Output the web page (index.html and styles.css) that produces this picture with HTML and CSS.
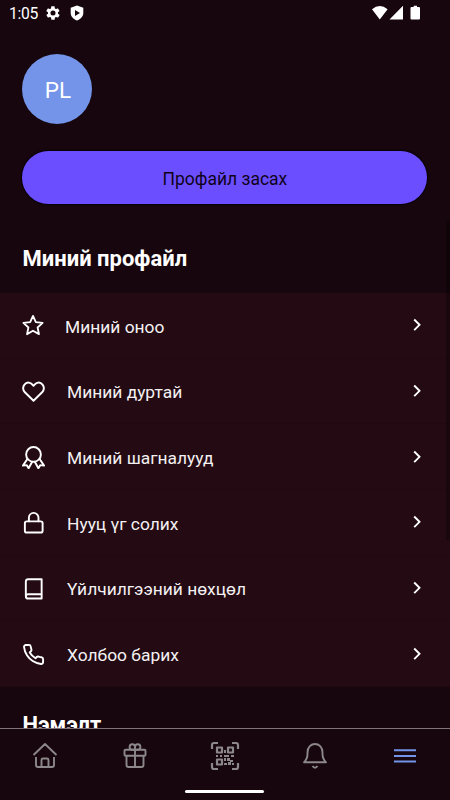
FILE: index.html
```html
<!DOCTYPE html>
<html lang="mn">
<head>
<meta charset="utf-8">
<title>Профайл</title>
<link rel="stylesheet" href="styles.css">
</head>
<body>
<div class="screen">
  <header class="status">
    <span class="clock">1:05</span>
    <svg class="gear" width="16" height="16" viewBox="0 0 24 24"><path fill="#fff" fill-rule="evenodd" d="M19.4 13a7.500 7.500 0 0 0 0-2l2.100-1.600a.5.5 0 0 0 .1-.7l-2-3.400a.5.5 0 0 0-.6-.2l-2.500 1a7 7 0 0 0-1.700-1l-.4-2.700a.5.5 0 0 0-.5-.4h-4a.5.5 0 0 0-.5.400L9 5.100a7 7 0 0 0-1.700 1l-2.500-1a.5.5 0 0 0-.6.2l-2 3.400a.5.5 0 0 0 .1.700L4.500 11a7.500 7.500 0 0 0 0 2l-2.100 1.600a.5.5 0 0 0-.1.700l2 3.400c.1.200.4.300.6.200l2.500-1a7 7 0 0 0 1.700 1l.4 2.700c0 .2.200.4.500.4h4c.3 0 .5-.2.500-.4l.4-2.700a7 7 0 0 0 1.700-1l2.500 1c.2.100.5 0 .6-.2l2-3.400a.5.5 0 0 0-.1-.7zM12 15.800a3.800 3.800 0 1 1 0-7.600 3.800 3.800 0 0 1 0 7.600z"/></svg>
    <svg class="shield" width="14" height="16" viewBox="0 0 14 16"><path fill="#fff" fill-rule="evenodd" d="M7 .5 13.300 2.800V8c0 3.500-2.700 6.300-6.300 7.500C3.400 14.300.7 11.500.7 8V2.800zM5 5v6l5-3z"/></svg>
    <svg class="signals" width="48" height="16" viewBox="0 0 48 16"><path fill="#fff" d="M0 4.200Q7.800-2.400 15.600 4.200L7.800 14.500zM31 .8V14.500H17.500zM39.500 2h2.200V.8h3.300V2H47q1 0 1 1v10.500q0 1-1 1h-7.500q-1 0-1-1V3q0-1 1-1z"/></svg>
  </header>
  <main class="content">
    <div class="avatar">PL</div>
    <button class="edit">Профайл засах</button>
    <h2 class="heading">Миний профайл</h2>
    <ul class="menu">
      <li class="row"><svg class="icon star" viewBox="0 0 24 24"><path d="m12 2 3.100 6.900 7.400.8-5.500 5 1.500 7.300-6.500-3.700L5.500 22 7 14.700l-5.500-5 7.400-.8z"/></svg><span class="label">Миний оноо</span><svg class="chev" viewBox="0 0 8 14"><path d="m1.200 1.500 5.300 5.300-5.300 5.300"/></svg></li>
      <li class="row"><svg class="icon" viewBox="0 0 24 24"><path d="M12 21.700 3 12.800C-1.500 7.500 4-.3 10 4L12 6l2-2c6-4.300 11.500 3.500 7 8.800z"/></svg><span class="label">Миний дуртай</span><svg class="chev" viewBox="0 0 8 14"><path d="m1.200 1.500 5.300 5.300-5.300 5.300"/></svg></li>
      <li class="row"><svg class="icon" viewBox="0 0 24 24"><circle cx="12" cy="8.800" r="7.700"/><path d="m5.600 13.500-4.600 7 4-.5 1.900 3.300 3.600-6.600m7.900-3.200 4.600 7-4-.5-1.900 3.300-3.600-6.600"/></svg><span class="label">Миний шагналууд</span><svg class="chev" viewBox="0 0 8 14"><path d="m1.200 1.500 5.300 5.300-5.300 5.300"/></svg></li>
      <li class="row"><svg class="icon" viewBox="0 0 24 24"><rect x="3" y="10.800" width="18.500" height="11.700" rx="2"/><path d="M7.200 10.800V7a5 5 0 0 1 10 0v3.800"/></svg><span class="label">Нууц үг солих</span><svg class="chev" viewBox="0 0 8 14"><path d="m1.200 1.500 5.300 5.300-5.300 5.300"/></svg></li>
      <li class="row"><svg class="icon" viewBox="0 0 24 24"><path d="M20.500 18V2.300H6.500Q4 2.300 4 4.800v15.200Q4 22.500 6.500 22.500h14V18h-14Q4 18 4 20.300"/></svg><span class="label">Үйлчилгээний нөхцөл</span><svg class="chev" viewBox="0 0 8 14"><path d="m1.200 1.500 5.300 5.300-5.300 5.300"/></svg></li>
      <li class="row"><svg class="icon" viewBox="0 0 24 24"><path d="M22 16.920v3a2 2 0 0 1-2.180 2 19.790 19.790 0 0 1-8.630-3.070 19.500 19.500 0 0 1-6-6A19.790 19.790 0 0 1 2.120 4.180 2 2 0 0 1 4.110 2h3a2 2 0 0 1 2 1.720c.13.960.36 1.900.7 2.810a2 2 0 0 1-.45 2.110L8.090 9.910a16 16 0 0 0 6 6l1.270-1.270a2 2 0 0 1 2.110-.45c.91.340 1.850.57 2.810.7A2 2 0 0 1 22 16.920z"/></svg><span class="label">Холбоо барих</span><svg class="chev" viewBox="0 0 8 14"><path d="m1.200 1.500 5.300 5.300-5.300 5.300"/></svg></li>
    </ul>
    <h2 class="heading more">Нэмэлт</h2>
    <div class="scrollbar"></div>
  </main>
  <nav class="tabs">
    <div class="tab"><svg viewBox="0 0 30 30"><path d="m3.500 14 11.500-11 11.500 11M6 16V24q0 2 2 2h14q2 0 2-2v-8M11.500 26v-7q0-1.500 1.500-1.500h4q1.500 0 1.500 1.500v7"/></svg></div>
    <div class="tab"><svg viewBox="0 0 30 30"><rect x="4.500" y="8.700" width="21" height="6" rx="1"/><path d="M6.500 14.700V24q0 2 2 2h13q2 0 2-2v-9.300M15 8.700V26M15 8.700H12a2.700 2.700 0 1 1 3-2.700zm0 0h3A2.700 2.700 0 1 0 15 6z"/></svg></div>
    <div class="tab"><svg viewBox="0 0 30 30"><path class="bold" d="M2 8V4q0-2 2-2h4M22 2h4q2 0 2 2v4M2 22v4q0 2 2 2h4M22 28h4q2 0 2-2v-4"/><path class="bold" d="M7 6.500h5v5H7zM18 6.500h5v5h-5zM7 18.500h5v5H7z"/><path class="dots" d="M14 9h2v3h-2zM6 14h2v2H6zM10 14h2v2h-2zM14 14h5v2h-5zM21 14h3v2h-3zM14 17h2v3h-2zM17 17h3v3h-3zM20 19h3v2h-3zM14 22h3v2h-3zM18 21h3v3h-3zM22 22h2v2h-2z"/></svg></div>
    <div class="tab"><svg viewBox="0 0 30 30"><path d="M4 21.300q3.500-3.500 3.500-8.300V11.500c0-11.300 15-11.300 15 0V13q0 4.800 3.500 8.300zM12.500 25q2.500 3.500 5 0"/></svg></div>
    <div class="tab active"><svg viewBox="0 0 30 30"><path d="M4 9.300h22M4 15h22M4 20.600h22"/></svg></div>
    <div class="home-bar"></div>
  </nav>
</div>
</body>
</html>
```
FILE: styles.css
```css
* { box-sizing: border-box; }
body { margin: 0; background: #17060d; color: #fff; font-family: Roboto, "Noto Sans", sans-serif; }
.screen { width: 450px; height: 800px; display: flex; flex-direction: column; overflow: hidden; }
.status { height: 30px; flex: none; display: flex; align-items: flex-start; padding: 5px 30px 0 9px; }
.clock { font-size: 15.700px; line-height: 18px; width: 36px; letter-spacing: -0.3px; }
.shield { margin-left: 9px; }
.signals { margin-left: auto; }
.content { position: relative; height: 698px; flex: none; overflow: hidden; padding-top: 24px; }
.avatar { width: 70px; height: 70px; margin-left: 22.400px; border-radius: 50%; background: #7394e8; font-size: 22.500px; display: flex; align-items: center; justify-content: center; padding: 2px 0 0 1px; }
.edit { display: block; width: 405px; height: 52.500px; margin: 27.300px 0 0 22.400px; border: 0; border-radius: 27px; background: #6b4eff; color: #100318; font: 17.500px Roboto, "Noto Sans", sans-serif; padding: 2px 0 0; box-shadow: 0 0 1px 1px #090008; }
.heading { margin: 42px 0 0 22.500px; font-size: 22px; line-height: 26px; font-weight: 700; }
.menu { list-style: none; margin: 21.200px 0 0; padding: 0; }
.row { height: 65.650px; background: #230a13; border-bottom: 1px solid #200911; display: flex; align-items: center; padding: 0 29px 0 22px; }
.icon { width: 23px; height: 23px; margin-top: 1px; margin-right: 22px; fill: none; stroke: #fff; stroke-width: 2; stroke-linejoin: round; stroke-linecap: round; }
.star { width: 22px; height: 22px; margin-top: 0; margin-right: 21px; }
.label { flex: 1; font-size: 17.400px; line-height: 22px; padding-top: 3px; color: #f4f1f2; }
.chev { width: 8px; height: 14px; fill: none; stroke: #fff; stroke-width: 1.900; }
.more { margin-top: 25px; }
.scrollbar { position: absolute; right: 0; top: 190px; width: 4px; height: 320px; background: rgba(0, 0, 0, .25); }
.tabs { position: relative; height: 72px; flex: none; border-top: 1px solid #817479; display: flex; }
.tab { flex: 1; display: flex; justify-content: center; padding-top: 12px; }
.tab svg { width: 30px; height: 30px; fill: none; stroke: #8c888a; stroke-width: 1.900; stroke-linejoin: round; }
.tab .bold { stroke-width: 2.200; }
.tab .dots { fill: #8c888a; stroke: none; }
.tab.active svg { stroke: #7394e8; stroke-width: 2; }
.home-bar { position: absolute; left: 185px; top: 61px; width: 79px; height: 3px; border-radius: 2px; background: #fff; }
```
